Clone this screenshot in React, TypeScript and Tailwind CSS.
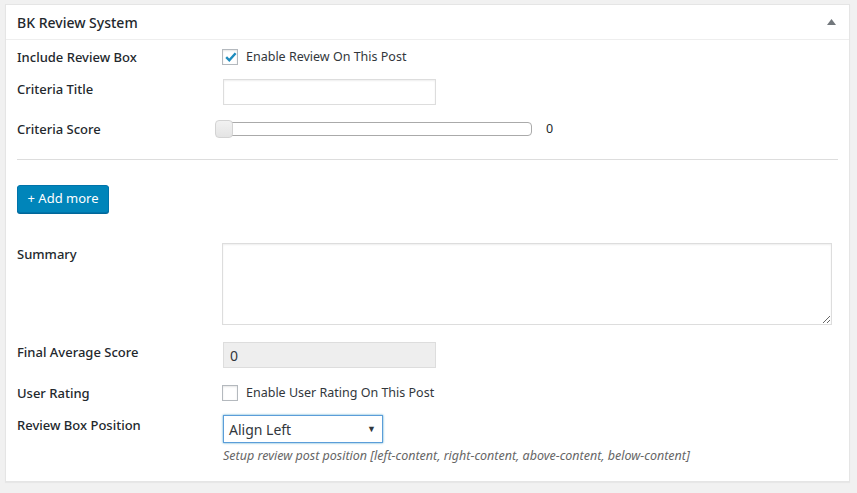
import React from "react";

const font = { fontFamily: '"Noto Sans", "Open Sans", Arial, sans-serif' };

function Checkbox({ checked }: { checked?: boolean }) {
  return (
    <span className="relative flex h-[16px] w-[16px] shrink-0 items-center justify-center border border-[#b4b9be] bg-white shadow-[inset_0_1px_2px_rgba(0,0,0,0.1)]">
      {checked && (
        <svg width="14" height="14" viewBox="0 0 14 14" className="absolute left-[1px] top-[0px]">
          <path d="M2.2 7.2 L5.3 10.3 L11.6 3.2" fill="none" stroke="#1e8cbe" strokeWidth="2.4" />
        </svg>
      )}
    </span>
  );
}

const Label = ({ children }: { children: React.ReactNode }) => (
  <div className="w-[205px] shrink-0 text-[13px] font-medium leading-[18px] text-[#23282d]">{children}</div>
);

export default function App() {
  return (
    <div className="h-[493px] w-[857px] bg-[#f1f1f1] pl-[5px] pt-[4px]" style={font}>
      <div className="w-[845px] border border-[#e5e5e5] bg-white shadow-[0_1px_1px_rgba(0,0,0,0.04)]">
        {/* header */}
        <div className="flex h-[35px] items-center justify-between border-b border-[#eeeeee] pl-[11px] pr-[12px]">
          <h2 className="text-[14px] font-medium text-[#23282d]">BK Review System</h2>
          <svg width="9" height="6" viewBox="0 0 9 6" className="mr-[1px]">
            <path d="M0 6 L4.5 0 L9 6 Z" fill="#72777c" />
          </svg>
        </div>

        <div className="px-[11px] pb-[15px]">
          {/* include review */}
          <div className="flex h-[34px] items-center">
            <Label>Include Review Box</Label>
            <Checkbox checked />
            <span className="ml-[8px] text-[12.5px] text-[#32373c]">Enable Review On This Post</span>
          </div>

          {/* criteria title */}
          <div className="mt-[5px] flex items-start">
            <div className="pt-[1px]">
              <Label>Criteria Title</Label>
            </div>
            <input
              type="text"
              className="ml-[1px] h-[26px] w-[213px] border border-[#dddddd] bg-white px-[6px] text-[14px] shadow-[inset_0_1px_2px_rgba(0,0,0,0.07)] outline-none"
            />
          </div>

          {/* criteria score */}
          <div className="mt-[15px] flex h-[18px] items-center">
            <Label>Criteria Score</Label>
            <div className="relative -ml-[7px] flex h-[18px] w-[317px] items-center">
              <div className="ml-[1px] h-[14px] w-[316px] rounded-[4px] border border-[#aaaaaa] bg-white" />
              <div className="absolute left-0 top-0 h-[18px] w-[18px] rounded-[4px] border border-[#d3d3d3] bg-gradient-to-b from-[#f2f2f2] to-[#e4e4e4]" />
            </div>
            <span className="ml-[14px] text-[12.5px] text-[#23282d]">0</span>
          </div>

          <div className="mt-[21px] h-px w-full bg-[#dddddd]" />

          {/* add more */}
          <button
            type="button"
            className="mt-[25px] h-[28px] w-[92px] rounded-[3px] border border-[#0073aa] bg-[#0085ba] text-[13px] text-white shadow-[0_1px_0_#006799]"
          >
            + Add more
          </button>

          {/* summary */}
          <div className="mt-[30px] flex items-start">
            <div className="pt-[2px]">
              <Label>Summary</Label>
            </div>
            <textarea className="h-[82px] w-[610px] resize border border-[#dddddd] bg-white shadow-[inset_0_1px_2px_rgba(0,0,0,0.07)] outline-none" />
          </div>

          {/* final average */}
          <div className="mt-[17px] flex items-start">
            <div className="pt-[1px]">
              <Label>Final Average Score</Label>
            </div>
            <div className="ml-[1px] flex h-[26px] w-[213px] items-center border border-[#dddddd] bg-[#eeeeee] px-[6px] text-[14px] text-[#32373c]">
              0
            </div>
          </div>

          {/* user rating */}
          <div className="mt-[16px] flex h-[18px] items-center">
            <Label>User Rating</Label>
            <Checkbox />
            <span className="ml-[8px] text-[12.5px] text-[#32373c]">Enable User Rating On This Post</span>
          </div>

          {/* position */}
          <div className="mt-[13px] flex items-start">
            <div className="pt-[1px]">
              <Label>Review Box Position</Label>
            </div>
            <div className="ml-[1px]">
              <div className="flex h-[28px] w-[160px] items-center justify-between border border-[#5b9dd9] bg-white pl-[5px] pr-[6px] text-[14px] text-[#32373c] shadow-[0_0_2px_rgba(30,140,190,0.8)]">
                <span>Align Left</span>
                <span className="text-[9px] text-[#32373c]">▼</span>
              </div>
              <p className="mt-[4px] text-[12.5px] italic text-[#666666]">
                Setup review post position [left-content, right-content, above-content, below-content]
              </p>
            </div>
          </div>
        </div>
      </div>
    </div>
  );
}
